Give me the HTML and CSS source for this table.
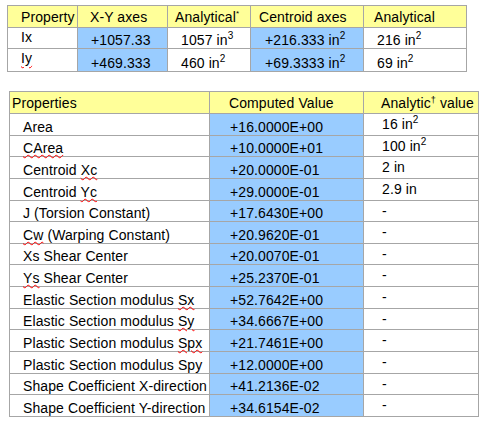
FILE: index.html
```html
<!DOCTYPE html>
<html>
<head>
<meta charset="utf-8">
<link rel="stylesheet" href="styles.css">
</head>
<body>
<table class="t1">
  <colgroup><col class="c1"><col class="c2"><col class="c3"><col class="c4"><col class="c5"></colgroup>
  <tr class="hd">
    <th class="p13">Property</th>
    <th class="p12">X-Y axes</th>
    <th class="p7">Analytical<sup class="ast">*</sup></th>
    <th class="p8">Centroid axes</th>
    <th class="p10">Analytical</th>
  </tr>
  <tr class="r1">
    <td class="p13 top">Ix</td>
    <td class="blue p13">+1057.33</td>
    <td class="p13">1057 in<sup>3</sup></td>
    <td class="blue p14">+216.333 in<sup>2</sup></td>
    <td class="p13">216 in<sup>2</sup></td>
  </tr>
  <tr class="r2">
    <td class="p13 top lbl2"><span class="sp">Iy</span></td>
    <td class="blue p13">+469.333</td>
    <td class="p13">460 in<sup>2</sup></td>
    <td class="blue p14">+69.3333 in<sup>2</sup></td>
    <td class="p13">69 in<sup>2</sup></td>
  </tr>
</table>

<table class="t2">
  <colgroup><col class="d1"><col class="d2"><col class="d3"></colgroup>
  <tr class="hd">
    <th class="p2">Properties</th>
    <th class="p19">Computed Value</th>
    <th class="p17 top">Analytic<sup class="dag">†</sup> value</th>
  </tr>
  <tr><td class="p13">Area</td><td class="blue p20">+16.0000E+00</td><td class="p18 top">16 in<sup>2</sup></td></tr>
  <tr><td class="p13"><span class="sp">CArea</span></td><td class="blue p20">+10.0000E+01</td><td class="p18 top">100 in<sup>2</sup></td></tr>
  <tr><td class="p13">Centroid <span class="sp">Xc</span></td><td class="blue p20">+20.0000E-01</td><td class="p18 top">2 in</td></tr>
  <tr><td class="p13">Centroid <span class="sp">Yc</span></td><td class="blue p20">+29.0000E-01</td><td class="p18 top">2.9 in</td></tr>
  <tr><td class="p13">J (Torsion Constant)</td><td class="blue p20">+17.6430E+00</td><td class="p18 top">-</td></tr>
  <tr><td class="p13"><span class="sp">Cw</span> (Warping Constant)</td><td class="blue p20">+20.9620E-01</td><td class="p18 top">-</td></tr>
  <tr><td class="p13">Xs Shear Center</td><td class="blue p20">+20.0070E-01</td><td class="p18 top">-</td></tr>
  <tr><td class="p13"><span class="sp">Ys</span> Shear Center</td><td class="blue p20">+25.2370E-01</td><td class="p18 top">-</td></tr>
  <tr><td class="p13">Elastic Section modulus <span class="sp">Sx</span></td><td class="blue p20">+52.7642E+00</td><td class="p18 top">-</td></tr>
  <tr><td class="p13">Elastic Section modulus <span class="sp">Sy</span></td><td class="blue p20">+34.6667E+00</td><td class="p18 top">-</td></tr>
  <tr><td class="p13">Plastic Section modulus <span class="sp">Spx</span></td><td class="blue p20">+21.7461E+00</td><td class="p18 top">-</td></tr>
  <tr><td class="p13">Plastic Section modulus Spy</td><td class="blue p20">+12.0000E+00</td><td class="p18 top">-</td></tr>
  <tr><td class="p13">Shape Coefficient X-direction</td><td class="blue p20">+41.2136E-02</td><td class="p18 top">-</td></tr>
  <tr><td class="p13">Shape Coefficient Y-direction</td><td class="blue p20">+34.6154E-02</td><td class="p18 top">-</td></tr>
</table>
</body>
</html>
```

FILE: styles.css
```css
html, body {
  margin: 0;
  padding: 0;
  background: #ffffff;
}
body {
  font-family: "Liberation Sans", Arial, sans-serif;
  font-size: 14px;
  color: #000000;
  padding: 5px 0 0 7px;
}
table {
  border-collapse: collapse;
  table-layout: fixed;
}
th, td {
  border: 1px solid #a6a6a6;
  padding: 0 0 2px 0;
  line-height: 16px;
  text-align: left;
  vertical-align: bottom;
  white-space: nowrap;
  font-weight: normal;
  letter-spacing: 0.1px;
}
.hd th {
  background: #ffff99;
}
.blue {
  background: #99ccff;
}
.top {
  vertical-align: top;
  padding-top: 2px;
  padding-bottom: 0;
}
.t1 .c1 { width: 70px; }
.t1 .c2 { width: 90px; }
.t1 .c3 { width: 83px; }
.t1 .c4 { width: 113px; }
.t1 .c5 { width: 103px; }
.t1 .hd { height: 22px; }
.t1 .r1 { height: 21px; }
.t1 .r2 { height: 23px; }
.t1 .hd th { padding-bottom: 2px; }
.t1 td { padding-bottom: 0; }
.t1 td.top { padding-top: 1px; }
.t1 .lbl2 { padding-top: 4px; }

.t2 {
  margin-top: 19px;
  margin-left: 2px;
}
.t2 .d1 { width: 200px; }
.t2 .d2 { width: 154px; }
.t2 .d3 { width: 115px; }
.t2 tr { height: 21.64px; }
.t2 .hd { height: 22px; }
.t2 td { padding-bottom: 0; }
.t2 th.top { padding-top: 3px; }

.p2 { padding-left: 2px; }
.p7 { padding-left: 7px; }
.p8 { padding-left: 8px; }
.p10 { padding-left: 10px; }
.p12 { padding-left: 12px; }
.p13 { padding-left: 13px; }
.p14 { padding-left: 14px; }
.p17 { padding-left: 17px; }
.p18 { padding-left: 18px; }
.p19 { padding-left: 19px; }
.p20 { padding-left: 20px; }

sup {
  font-size: 10px;
  line-height: 0;
  vertical-align: 6px;
}
sup.ast {
  font-size: 8px;
  vertical-align: 6px;
}
sup.dag {
  font-size: 9px;
  vertical-align: 5px;
}
.sp {
  text-decoration-line: underline;
  text-decoration-style: wavy;
  text-decoration-color: #ff0000;
  text-decoration-thickness: 1px;
  text-underline-offset: 1px;
}
```
